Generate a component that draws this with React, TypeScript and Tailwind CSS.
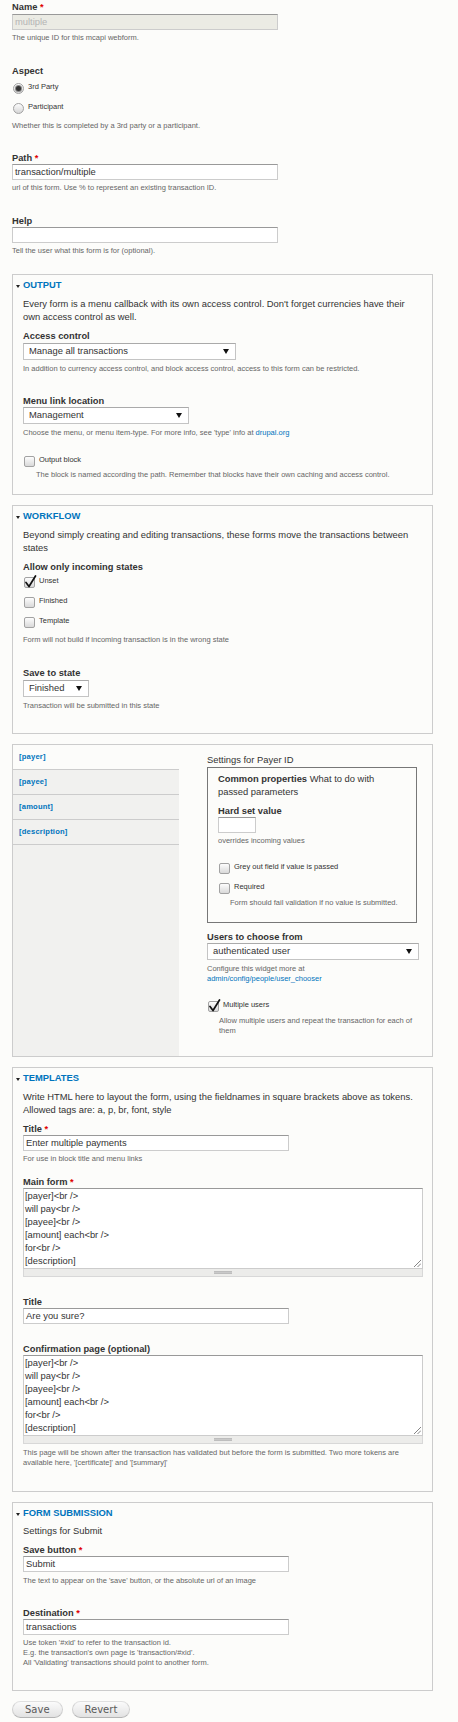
import React from "react";

const SANS = "font-['Liberation_Sans',Arial,Helvetica,sans-serif]";

function Req() {
  return <span className="text-[#e00000]"> *</span>;
}

function Label({ children, req, className = "" }: { children: React.ReactNode; req?: boolean; className?: string }) {
  return (
    <div className={`text-[9.3px] leading-[11px] font-bold text-[#333] whitespace-nowrap ${className}`}>
      {children}
      {req && <Req />}
    </div>
  );
}

function Desc({ children, className = "" }: { children: React.ReactNode; className?: string }) {
  return <div className={`text-[7.5px] leading-[10px] text-[#666] whitespace-nowrap ${className}`}>{children}</div>;
}

function Body({ children, className = "" }: { children: React.ReactNode; className?: string }) {
  return <div className={`text-[9.4px] leading-[13px] text-[#333] whitespace-nowrap ${className}`}>{children}</div>;
}

function TextInput({ value = "", className = "", disabled }: { value?: string; className?: string; disabled?: boolean }) {
  return (
    <div
      className={`h-[16px] border border-[#ccc] border-t-[#999] flex items-center px-[2px] text-[9.4px] whitespace-nowrap ${
        disabled ? "bg-[#ebebe4] text-[#b4b4b4]" : "bg-white text-[#333]"
      } ${className}`}
    >
      {value}
    </div>
  );
}

function Select({ value, className = "" }: { value: string; className?: string }) {
  return (
    <div
      className={`h-[17px] border border-[#c4c4c4] border-t-[#aaa] bg-white flex items-center justify-between pl-[5px] pr-[6px] text-[9.4px] text-[#333] whitespace-nowrap ${className}`}
    >
      <span>{value}</span>
      <svg width="6" height="5" viewBox="0 0 6 5" className="shrink-0">
        <path d="M0 0H6L3 5Z" fill="#111" />
      </svg>
    </div>
  );
}

function Checkbox({ label, checked, className = "" }: { label: string; checked?: boolean; className?: string }) {
  return (
    <div className={`flex items-start ${className}`}>
      <span className="relative ml-[1px] w-[11px] h-[11px] shrink-0 rounded-[2px] border border-[#a2a2a2] bg-linear-to-b from-[#fdfdfd] to-[#d9d9d9]">
        {checked && (
          <svg width="13" height="13" viewBox="0 0 13 13" className="absolute left-[-1px] top-[-3px]">
            <path d="M2 7.5 L5 11.5 L11.5 1" fill="none" stroke="#111" strokeWidth="1.7" strokeLinecap="round" strokeLinejoin="round" />
          </svg>
        )}
      </span>
      <span className="ml-[4px] -mt-[1.5px] text-[7.5px] leading-[10px] text-[#333] whitespace-nowrap">{label}</span>
    </div>
  );
}

function Radio({ label, checked, className = "" }: { label: string; checked?: boolean; className?: string }) {
  return (
    <div className={`flex items-start ${className}`}>
      <span className="ml-[1px] w-[11px] h-[11px] shrink-0 rounded-full border border-[#a2a2a2] bg-linear-to-b from-[#fdfdfd] to-[#d6d6d6] flex items-center justify-center">
        {checked && <span className="w-[5px] h-[5px] rounded-full bg-[#333] ring-1 ring-[#888]" />}
      </span>
      <span className="ml-[4px] -mt-[1.5px] text-[7.5px] leading-[10px] text-[#333] whitespace-nowrap">{label}</span>
    </div>
  );
}

function Fieldset({ title, children, className = "" }: { title: string; children: React.ReactNode; className?: string }) {
  return (
    <div className={`w-[421px] border border-[#ccc] pl-[10px] pr-[10px] pt-[4px] ${className}`}>
      <div className="relative text-[9.4px] leading-[12px] font-bold text-[#0074bd] uppercase whitespace-nowrap">
        <svg width="4" height="3" viewBox="0 0 4 3" className="absolute left-[-7px] top-[6px]">
          <path d="M0 0H4L2 3Z" fill="#222" />
        </svg>
        {title}
      </div>
      {children}
    </div>
  );
}

function CodeArea({ lines }: { lines: string[] }) {
  return (
    <div className="w-[400px]">
      <div className="relative h-[81px] border border-[#ccc] border-t-[#999] bg-white pl-[1px] text-[9.4px] leading-[13px] text-[#333] whitespace-pre">
        {lines.map((l, i) => (
          <div key={i}>{l}</div>
        ))}
        <svg width="7" height="7" viewBox="0 0 7 7" className="absolute right-[1px] bottom-[1px]">
          <path d="M7 0L0 7M7 3.5L3.5 7" stroke="#777" strokeWidth="0.9" />
        </svg>
      </div>
      <div className="h-[8px] bg-[#ececea] border border-t-0 border-[#d8d8d8] flex items-center justify-center">
        <span className="w-[18px] h-[3px] bg-[#c9c9c9] border-y border-[#bdbdbd]" />
      </div>
    </div>
  );
}

const templateLines = ["[payer]<br />", "will pay<br />", "[payee]<br />", "[amount] each<br />", "for<br />", "[description]"];

const tabs = ["[payer]", "[payee]", "[amount]", "[description]"];

export default function App() {
  return (
    <div className={`${SANS} w-[458px] min-h-[1722px] bg-[#fcfcfa] pl-[12px] pt-[2px] text-[#333]`}>
      {/* Name */}
      <Label req>Name</Label>
      <TextInput value="multiple" disabled className="mt-[1px] w-[266px]" />
      <Desc className="mt-[3px]">The unique ID for this mcapi webform.</Desc>

      {/* Aspect */}
      <Label className="mt-[23px]">Aspect</Label>
      <Radio label="3rd Party" checked className="mt-[6px]" />
      <Radio label="Participant" className="mt-[9px]" />
      <Desc className="mt-[7px]">Whether this is completed by a 3rd party or a participant.</Desc>

      {/* Path */}
      <Label req className="mt-[22px]">Path</Label>
      <TextInput value="transaction/multiple" className="w-[266px]" />
      <Desc className="mt-[3px]">url of this form. Use % to represent an existing transaction ID.</Desc>

      {/* Help */}
      <Label className="mt-[23px]">Help</Label>
      <TextInput className="w-[266px]" />
      <Desc className="mt-[3px]">Tell the user what this form is for (optional).</Desc>

      {/* Output */}
      <Fieldset title="Output" className="mt-[18px] pb-[14px]">
        <Body className="mt-[6px]">
          Every form is a menu callback with its own access control. Don't forget currencies have their
          <br />
          own access control as well.
        </Body>
        <Label className="mt-[8px]">Access control</Label>
        <Select value="Manage all transactions" className="mt-[1px] w-[213px]" />
        <Desc className="mt-[4px]">
          In addition to currency access control, and block access control, access to this form can be restricted.
        </Desc>
        <Label className="mt-[22px]">Menu link location</Label>
        <Select value="Management" className="w-[166px]" />
        <Desc className="mt-[4px]">
          Choose the menu, or menu item-type. For more info, see 'type' info at{" "}
          <span className="text-[#0074bd]">drupal.org</span>
        </Desc>
        <Checkbox label="Output block" className="mt-[18px]" />
        <Desc className="mt-[3px] ml-[13px]">
          The block is named according the path. Remember that blocks have their own caching and access control.
        </Desc>
      </Fieldset>

      {/* Workflow */}
      <Fieldset title="Workflow" className="mt-[10px] pb-[22px]">
        <Body className="mt-[6px]">
          Beyond simply creating and editing transactions, these forms move the transactions between
          <br />
          states
        </Body>
        <Label className="mt-[8px]">Allow only incoming states</Label>
        <Checkbox label="Unset" checked className="mt-[4px]" />
        <Checkbox label="Finished" className="mt-[9px]" />
        <Checkbox label="Template" className="mt-[9px]" />
        <Desc className="mt-[7px]">Form will not build if incoming transaction is in the wrong state</Desc>
        <Label className="mt-[23px]">Save to state</Label>
        <Select value="Finished" className="mt-[1px] w-[66px]" />
        <Desc className="mt-[4px]">Transaction will be submitted in this state</Desc>
      </Fieldset>

      {/* Vertical tabs */}
      <div className="mt-[10px] w-[421px] h-[313px] border border-[#ccc] flex">
        <div className="w-[166px] bg-[#f1f1ef] shrink-0">
          {tabs.map((t, i) => (
            <div
              key={t}
              className={`h-[25px] border-b border-[#ccc] flex items-center pl-[6px] text-[7.6px] font-bold tracking-[0.2px] text-[#0074bd] ${
                i === 0 ? "bg-[#fcfcfa]" : ""
              }`}
            >
              {t}
            </div>
          ))}
        </div>
        <div className="flex-1 pl-[28px] pr-[13px] pt-[9px]">
          <div className="text-[9.4px] leading-[12px] text-[#333] whitespace-nowrap">Settings for Payer ID</div>
          <div className="mt-[1px] w-[210px] border border-[#777] px-[10px] pt-[4px] pb-[14px]">
            <Body>
              <span className="font-bold">Common properties</span> What to do with
              <br />
              passed parameters
            </Body>
            <Label className="mt-[8px]">Hard set value</Label>
            <TextInput className="w-[38px]" />
            <Desc className="mt-[3px]">overrides incoming values</Desc>
            <Checkbox label="Grey out field if value is passed" className="mt-[17px]" />
            <Checkbox label="Required" className="mt-[9px]" />
            <Desc className="mt-[4px] ml-[12px]">Form should fail validation if no value is submitted.</Desc>
          </div>
          <Label className="mt-[9px]">Users to choose from</Label>
          <Select value="authenticated user" className="w-[212px]" />
          <Desc className="mt-[4px]">
            Configure this widget more at
            <br />
            <span className="text-[#0074bd]">admin/config/people/user_chooser</span>
          </Desc>
          <Checkbox label="Multiple users" checked className="mt-[17px]" />
          <Desc className="mt-[4px] ml-[12px]">
            Allow multiple users and repeat the transaction for each of
            <br />
            them
          </Desc>
        </div>
      </div>

      {/* Templates */}
      <Fieldset title="Templates" className="mt-[10px] pb-[23px]">
        <Body className="mt-[6px]">
          Write HTML here to layout the form, using the fieldnames in square brackets above as tokens.
          <br />
          Allowed tags are: a, p, br, font, style
        </Body>
        <Label req className="mt-[8px]">Title</Label>
        <TextInput value="Enter multiple payments" className="w-[266px]" />
        <Desc className="mt-[3px]">For use in block title and menu links</Desc>
        <Label req className="mt-[13px]">Main form</Label>
        <CodeArea lines={templateLines} />
        <Label className="mt-[20px]">Title</Label>
        <TextInput value="Are you sure?" className="w-[266px]" />
        <Label className="mt-[20px]">Confirmation page (optional)</Label>
        <CodeArea lines={templateLines} />
        <Desc className="mt-[4px]">
          This page will be shown after the transaction has validated but before the form is submitted. Two more tokens are
          <br />
          available here, '[certificate]' and '[summary]'
        </Desc>
      </Fieldset>

      {/* Form submission */}
      <Fieldset title="Form submission" className="mt-[10px] pb-[22px]">
        <Body className="mt-[5px]">Settings for Submit</Body>
        <Label req className="mt-[8px]">Save button</Label>
        <TextInput value="Submit" className="w-[266px]" />
        <Desc className="mt-[4px]">The text to appear on the 'save' button, or the absolute url of an image</Desc>
        <Label req className="mt-[22px]">Destination</Label>
        <TextInput value="transactions" className="w-[266px]" />
        <Desc className="mt-[3px] leading-[10.5px]">
          Use token '#xid' to refer to the transaction id.
          <br />
          E.g. the transaction's own page is 'transaction/#xid'.
          <br />
          All 'Validating' transactions should point to another form.
        </Desc>
      </Fieldset>

      {/* Actions */}
      <div className="mt-[10px] flex gap-[9px]">
        {["Save", "Revert"].map((b) => (
          <button
            key={b}
            type="button"
            className="h-[17px] px-[12px] rounded-full border border-[#d0d0d0] border-t-[#e0e0e0] border-b-[#b4b4b4] bg-linear-to-b from-[#fbfbfb] to-[#e2e2e2] text-[10px] leading-none text-[#5a5a5a] font-['DejaVu_Sans',Verdana,sans-serif] flex items-center"
          >
            {b}
          </button>
        ))}
      </div>
    </div>
  );
}
